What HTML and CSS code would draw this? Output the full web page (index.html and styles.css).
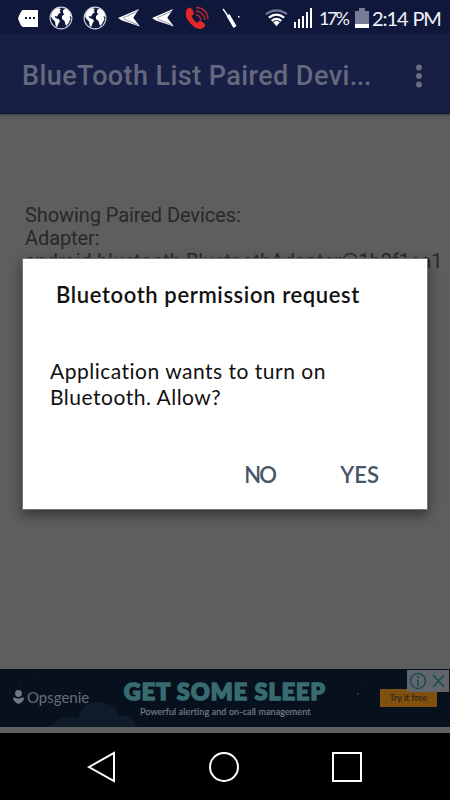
FILE: index.html
```html
<!DOCTYPE html>
<html lang="en">
<head>
<meta charset="utf-8">
<title>BlueTooth List Paired Devices</title>
<link rel="stylesheet" href="styles.css">
</head>
<body>
<div class="phone">
  <svg class="defs" width="0" height="0" aria-hidden="true">
    <symbol id="globe" viewBox="0 0 24 24">
      <circle cx="12" cy="12" r="10.9" fill="#0f173b" stroke="#cdd1de" stroke-width="1.1"/>
      <path fill="#fff" d="M2.500 8Q5 3 9 2L12 3 10.500 5 12 6 9.500 8 8 10.500 5.500 10 6.500 12 9.500 13 11 15 9.500 17.500 8 21.500 6.500 19 6 15.500 3.500 13 2 10.500ZM14 4 17 2.500 21 6 22.500 11 20.500 10 21.500 13 19 18 17 20 15.500 15 13 13 13 10 15.500 8 14 7Z"/>
    </symbol>
    <symbol id="plane" viewBox="0 0 24 20">
      <path fill="#fff" d="M0 9.500 22 0 16 9.300 23 18.500 4 12Z"/>
      <path fill="none" stroke="#6b728c" stroke-width=".8" d="M5 9.500 20 2.500M6 10.500 20 16.500"/>
    </symbol>
  </svg>
  <header class="status">
    <div class="notices">
      <svg class="message" viewBox="0 0 20 17"><path fill="#fff" d="M5 0H20V17H5Q3 17 0 8.500Q3 0 5 0Z"/><path fill="#0f173b" d="M7 7h2v2H7zM11 7h2v2h-2zM15 7h2v2h-2z"/></svg>
      <svg class="globe"><use href="#globe"/></svg>
      <svg class="globe"><use href="#globe"/></svg>
      <svg class="plane"><use href="#plane"/></svg>
      <svg class="plane"><use href="#plane"/></svg>
      <svg class="call" viewBox="0 0 24 24"><path fill="#e32729" d="M2 3Q5 0 7 3L9 7Q9 9 6.500 10Q8 14 12 17Q14 14 16 15L20 18Q21 20 18 22Q13 25 6 18Q-2 10 2 3Z"/><path fill="none" stroke="#b92731" stroke-width="1.500" d="M11 9q4 0 5 5M11 5q8 1 9 9M11 1.500Q22 2 23 13"/></svg>
      <svg class="wand" viewBox="0 0 18 22"><path fill="none" stroke="#fff" stroke-width="1.300" d="M1 2 6 9"/><path stroke="#fff" stroke-width="3.500" d="M6 8 13 20"/><path fill="#fff" d="M16 9h1.500v1.500H16z"/></svg>
    </div>
    <div class="system">
      <svg class="wifi" viewBox="0 0 24 18"><path fill="none" stroke="#707695" stroke-width="2.200" d="M1 5Q12-3 23 5"/><path fill="none" stroke="#fff" stroke-width="2.300" d="M4 8.500Q12 2.500 20 8.500M7 12Q12 8 17 12"/><path fill="#fff" d="m8.500 13.500 3.500-2 3.500 2-3.500 4z"/></svg>
      <svg class="signal" viewBox="0 0 18 20"><path fill="#fff" d="M0 14h2v6H0zM4 11h2v9H4zM8 8h2v12H8zM12 4h2v16h-2zM16 0h2v20h-2z"/></svg>
      <span class="percent">17%</span>
      <svg class="battery" viewBox="0 0 14 20"><path fill="#777c97" d="M4 0h6v3h4v17H0V3h4z"/><path fill="#fff" d="M0 16h14v4H0z"/></svg>
      <span class="clock">2:14 PM</span>
    </div>
  </header>
  <div class="appbar">
    <h1>BlueTooth List Paired Devi<span>...</span></h1>
    <svg class="more" viewBox="0 0 6 24"><circle cx="3" cy="3.500" r="2.900"/><circle cx="3" cy="12" r="2.900"/><circle cx="3" cy="20.500" r="2.900"/></svg>
  </div>
  <main>
    <p>Showing Paired Devices:<br>Adapter:<br>android.bluetooth.BluetoothAdapter@1b2f1ea1</p>
  </main>
  <div class="ad">
    <svg class="clouds" viewBox="0 0 450 58"><path fill="#101b29" d="M50 58Q64 43 78 49Q82 32 99 33Q117 35 119 47Q133 44 137 58Z"/><g fill="#263b48"><circle cx="20" cy="17" r=".7"/><circle cx="36" cy="8" r=".6"/><circle cx="358" cy="25" r="1"/><circle cx="362" cy="14" r=".6"/></g></svg>
    <div class="brand">
      <svg viewBox="0 0 11 14"><circle cx="5.500" cy="3.500" r="3.400"/><path d="M1 7Q5 10 10 7L11 9Q10 12 5.500 14Q1 12 0 9Z"/></svg>
      <span>Opsgenie</span>
    </div>
    <div class="pitch"><strong>GET SOME SLEEP</strong><small>Powerful alerting and on-call management</small></div>
    <span class="offer">Try it free</span>
    <svg class="choices" viewBox="0 0 42 22"><path fill="#626569" d="M0 0h42v22H0z"/><g fill="none" stroke="#174f55" stroke-width="1.600"><circle cx="11" cy="11" r="7.500"/><path d="m26 5 11 12M37 5 26 17M11 9.500V16M11 6v2"/></g></svg>
  </div>
  <div class="strip"></div>
  <nav>
    <svg viewBox="0 0 32 32"><path d="M3 16 28 2V30Z"/></svg>
    <svg viewBox="0 0 32 32"><circle cx="16" cy="16" r="14"/></svg>
    <svg viewBox="0 0 32 32"><path d="M2 2h28v28H2z"/></svg>
  </nav>
  <section class="dialog" role="dialog">
    <h2>Bluetooth permission request</h2>
    <p>Application wants to turn on<br>Bluetooth. Allow?</p>
    <div class="actions"><button class="no">NO</button><button class="yes">YES</button></div>
  </section>
</div>
</body>
</html>
```
FILE: styles.css
```css
* { box-sizing: border-box; }
body { margin: 0; background: #000; font-family: Roboto, sans-serif; }
.phone { width: 450px; height: 800px; position: relative; overflow: hidden; display: flex; flex-direction: column; background: #5e5e5e; white-space: nowrap; }
.defs { position: absolute; }
svg { display: block; flex: none; }
h1, h2, p { margin: 0; }
.status { height: 36px; flex: none; background: linear-gradient(#0f173b 31px, #141c43); display: flex; justify-content: space-between; padding-left: 18px; padding-right: 10px; color: #f1f3fa; font-family: Lato, sans-serif; }
.notices, .system { display: flex; align-items: center; }
.message { width: 20px; height: 17px; margin-right: 11px; }
.globe { width: 24px; height: 24px; margin-right: 10px; }
.plane { width: 23px; height: 19px; margin: 0 10px 0 1px; }
.call { width: 24px; height: 24px; margin-right: 13px; }
.wand { width: 18px; height: 22px; }
.wifi { width: 23px; height: 18px; margin-right: 6px; }
.signal { width: 18px; height: 20px; margin-right: 7px; }
.percent { width: 30px; font-size: 18px; letter-spacing: -2.2px; }
.battery { width: 14px; height: 20px; margin: 0 3px 0 6px; }
.clock { width: 68px; font-size: 20px; letter-spacing: -1.1px; word-spacing: 1px; }
.appbar { height: 78px; flex: none; background: #181f46; border-bottom: 1px solid #11162d; box-shadow: 0 1px 3px #393c4a; display: flex; align-items: center; justify-content: space-between; padding: 2px 28px 0 22px; }
.appbar h1 { font-size: 27px; line-height: 32px; font-weight: 500; letter-spacing: .42px; color: #64697c; }
.appbar h1 span { letter-spacing: -.4px; }
.more { width: 6px; height: 24px; fill: #6b6f81; }
main { flex: 1; min-height: 0; padding: 90px 0 0 25px; color: #282828; font-size: 20px; line-height: 23px; letter-spacing: -.08px; }
.ad { height: 58px; flex: none; position: relative; display: flex; background: #07111e; }
.clouds { position: absolute; inset: 0; width: 450px; height: 58px; }
.brand { position: relative; width: 124px; display: flex; align-items: center; gap: 3px; padding: 0 0 2px 13px; color: #686d75; font: 15px Lato, sans-serif; }
.brand svg { width: 11px; height: 14px; fill: #737780; }
.pitch { position: relative; width: 256px; display: flex; flex-direction: column; color: #737982; }
.pitch strong { margin-top: 11px; font: 900 23px/23px Lato, sans-serif; letter-spacing: 1.15px; color: #386b70; -webkit-text-stroke: 1.7px #386b70; }
.pitch small { margin: 3px 0 0 16px; font: 9px/11px Lato, sans-serif; letter-spacing: .1px; -webkit-text-stroke: .2px; }
.offer { position: relative; width: 57px; height: 18px; margin-top: 20px; background: #80500f; color: #30271b; font: 9px/18px Lato, sans-serif; text-align: center; -webkit-text-stroke: .2px; }
.choices { position: absolute; right: 1px; top: 1px; width: 42px; height: 22px; }
.strip { height: 6px; flex: none; background: #5d5f61; }
nav { height: 67px; flex: none; background: #000; display: flex; justify-content: space-between; padding: 18px 87px 0 86px; }
nav svg { width: 32px; height: 32px; fill: none; stroke: #fff; stroke-width: 2; }
nav svg:nth-child(2) { margin-right: 1px; }
.dialog { position: absolute; left: 22px; top: 258px; width: 406px; height: 252px; padding: 23px 29px 0 28px; background: #fff; border: 1px solid #777; box-shadow: 0 5px 12px rgba(0,0,0,.45); font-family: Lato, sans-serif; color: #111; }
.dialog h2 { margin-left: 5px; font-size: 22px; line-height: 26px; font-weight: 600; letter-spacing: .62px; }
.dialog p { margin-top: 50px; margin-left: -1px; font-size: 21px; line-height: 26px; letter-spacing: .5px; }
.actions { display: flex; justify-content: flex-end; gap: 68px; margin: 52px 19px 0 0; }
button { border: 0; padding: 0; background: none; color: #465568; font: 600 22px/26px Lato, sans-serif; }
.no { font-size: 22px; letter-spacing: -2px; }
.no { width: 28px; text-align: left; }
```
